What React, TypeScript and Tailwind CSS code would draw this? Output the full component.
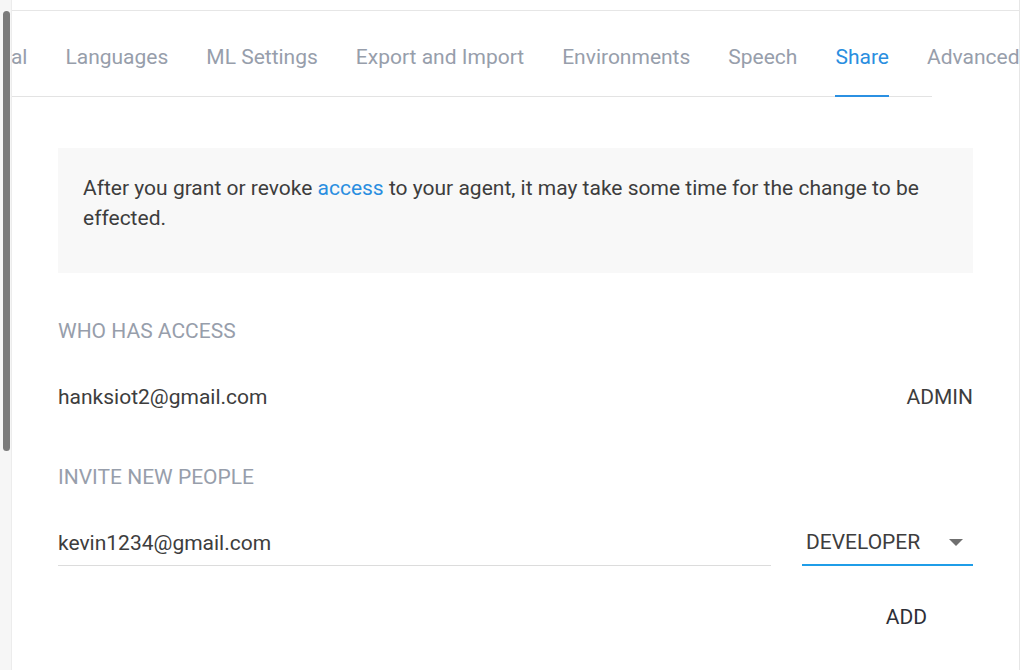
import { useState } from 'react'

const tabs = ['General', 'Languages', 'ML Settings', 'Export and Import', 'Environments', 'Speech', 'Share', 'Advanced']

export default function App() {
  const [active, setActive] = useState('Share')
  const [email, setEmail] = useState('kevin1234@gmail.com')

  return (
    <div className="flex w-[1024px] h-[670px] bg-white overflow-hidden font-['Roboto','Liberation_Sans',sans-serif]">
      {/* scrollbar strip */}
      <div className="w-[12px] shrink-0 bg-[#f6f6f6] border-r border-[#ececec] pt-[11px] pl-[3px]">
        <div className="w-[7px] h-[440px] rounded-full bg-[#7b7b7b]" />
      </div>

      <div className="w-[1008px] shrink-0 border-r border-[#e6e6e6] flex flex-col">
        <div className="h-[11px] border-b border-[#e6e6e6]" />

        <div className="relative h-[86px] overflow-hidden">
          <div className="absolute left-0 bottom-0 w-[920px] h-px bg-[#e3e3e3]" />
          <div className="relative flex h-full gap-[38px] ml-[-56px] whitespace-nowrap">
            {tabs.map((t) => (
              <button
                key={t}
                onClick={() => setActive(t)}
                className={`relative h-full flex items-center text-[21px] pt-[8px] ${
                  active === t ? 'text-[#2a8ee0]' : 'text-[#979eab]'
                }`}
              >
                {t}
                {active === t && <div className="absolute left-0 right-0 bottom-0 h-[2px] bg-[#2b90e2]" />}
              </button>
            ))}
          </div>
        </div>

        <div className="px-[46px] pt-[51px]">
          <div className="bg-[#f8f8f8] h-[125px] px-[25px] pt-[25px] text-[21px] leading-[30px] text-[#3d3d3d]">
            After you grant or revoke <span className="text-[#2a8ee0]">access</span> to your agent, it may take some time for the change to be effected.
          </div>

          <div className="mt-[44px] text-[21px] text-[#979eab] leading-[28px]">WHO HAS ACCESS</div>

          <div className="mt-[38px] flex justify-between text-[21px] leading-[28px] text-[#3d3d3d]">
            <span>hanksiot2@gmail.com</span>
            <span>ADMIN</span>
          </div>

          <div className="mt-[52px] text-[21px] text-[#979eab] leading-[28px]">INVITE NEW PEOPLE</div>

          <div className="mt-[35px] flex items-end gap-[31px]">
            <input
              value={email}
              onChange={(e) => setEmail(e.target.value)}
              className="w-[713px] h-[40px] pb-[6px] text-[21px] text-[#3d3d3d] border-b border-[#dcdcdc] outline-none bg-transparent"
            />
            <div className="w-[171px] h-[40px] flex items-center justify-between pl-[4px] pr-[10px] pb-[4px] border-b-2 border-[#1f9de8] text-[21px] text-[#3d3d3d]">
              <span>DEVELOPER</span>
              <svg width="14" height="8" viewBox="0 0 14 8">
                <path d="M0 0h14L7 7z" fill="#6f6f6f" />
              </svg>
            </div>
          </div>

          <div className="flex justify-end pr-[46px] mt-[36px]">
            <button className="text-[21px] text-[#2d2f38]">ADD</button>
          </div>
        </div>
      </div>
    </div>
  )
}
